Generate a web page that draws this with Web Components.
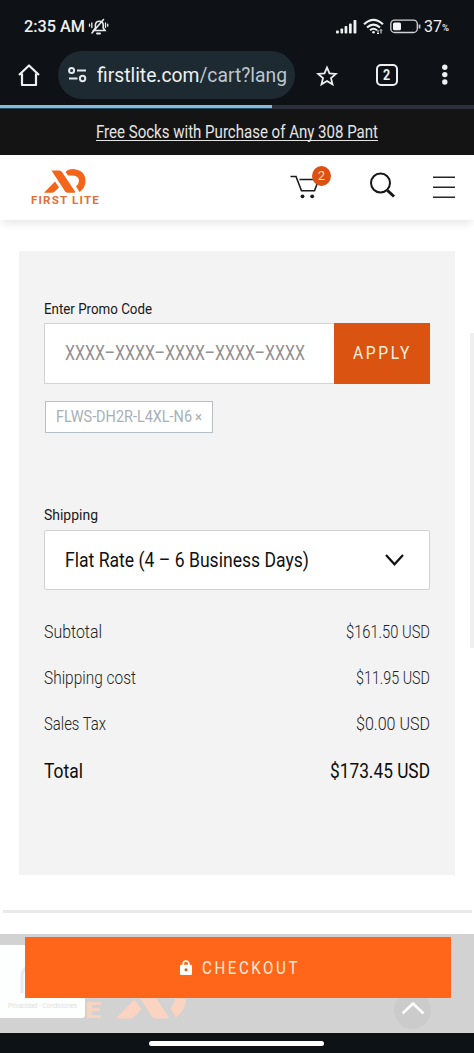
<!DOCTYPE html>
<html lang="en">
<head>
<meta charset="utf-8">
<title>First Lite cart</title>
<style>
html,body{margin:0;padding:0;background:#fff}
body{width:474px;height:1053px;overflow:hidden;font-family:Roboto,"Liberation Sans",sans-serif}
</style>
</head>
<body>
<cart-screen></cart-screen>
<script>
const define = (name, html, ready) => customElements.define(name, class extends HTMLElement {
  connectedCallback() {
    if (this.shadowRoot) return;
    this.attachShadow({mode: 'open'}).innerHTML = html;
    if (ready) ready(this);
  }
});

// Condenses its text horizontally to the width given in "w".
customElements.define('fit-text', class extends HTMLElement {
  constructor() {
    super();
    this.attachShadow({mode: 'open'}).innerHTML =
      '<style>:host{display:block;flex:none;white-space:nowrap}span{display:inline-block;transform-origin:0 50%}</style><span><slot></slot></span>';
  }
  connectedCallback() {
    const w = +this.getAttribute('w'), s = this.shadowRoot.querySelector('span');
    this.style.width = w + 'px';
    const n = s.getBoundingClientRect().width;
    if (n) s.style.transform = `scaleX(${w / n})`;
  }
});

define('status-bar', `<style>
:host{display:flex;height:51px;box-sizing:border-box;padding:17px 25px 0 24px;color:#eef0f2;font-size:16.5px;line-height:20px;font-weight:500;align-items:flex-start}
.r{margin-left:auto;display:flex}
.p{font-weight:400}
svg{display:block;flex:none}
</style>
<fit-text w="61">2:35 AM</fit-text>
<svg width="21" height="20" viewBox="0 0 21 20" style="margin-left:3px" fill="none" stroke="#e6e8ea" stroke-width="1.6" stroke-linecap="round"><path d="M5.500 13.500H17l-1.800-2.500V8c0-5-7.800-5-7.800 0v3zM4 16L15.500 2.500" /><path d="M9 16.500h3" stroke-width="2"/><path d="M3.800 6v4.500M1.500 7.200v2M17.500 6v4.500M19.700 7.200v2" stroke-width="1.300"/></svg>
<div class="r">
<svg width="22" height="20" viewBox="0 0 22 20" fill="#eef0f2" style="margin-right:1px"><rect x="1" y="13.500" width="2.800" height="3" rx=".8"/><rect x="5.500" y="11.500" width="2.600" height="5" rx=".8"/><rect x="9.600" y="9" width="2.700" height="7.500" rx=".8"/><rect x="14" y="6.500" width="2.700" height="10" rx=".8"/><rect x="18.500" y="3" width="2.900" height="13.500" rx=".8"/></svg>
<svg width="21" height="20" viewBox="0 0 21 20" style="margin-left:5px" fill="none" stroke="#eef0f2" stroke-width="2.100"><path d="M1 7.200Q10.500-1.600 20 7.200M4 10.500Q10.500 4.600 17 10.500M7 13.200Q10.500 10.300 14 13.200"/><circle cx="10.500" cy="15.300" r="1.300" fill="#eef0f2" stroke="none"/><path d="M15 13v4M18 12.500v4M14 16l1 1 1-1M17 13.500l1-1 1 1" stroke-width="1"/></svg>
<svg width="31" height="20" viewBox="0 0 31 20" style="margin:0 3px 0 6px"><rect x=".8" y="3.200" width="26.500" height="12.300" rx="3.800" fill="none" stroke="#d0d3d5" stroke-width="1.300"/><rect x="3" y="5.500" width="8" height="7.800" rx="1.500" fill="#f3f4f5"/><path d="M29.500 7.500v4" stroke="#c9cdd0" stroke-width="1.700"/></svg>
<fit-text w="18" class="p">37</fit-text><fit-text w="7" style="font-size:9px;line-height:23px">%</fit-text>
</div>`);

define('browser-bar', `<style>
:host{display:flex;height:54px;box-sizing:border-box;padding-left:17px;align-items:flex-start;color:#edf0f2}
svg{display:block;flex:none}
.pill{margin-left:17px;width:237px;height:48px;border-radius:24px;background:#1d2a32;display:flex;align-items:center;box-sizing:border-box;padding-left:10px;font-size:20px;line-height:48px}
.pill fit-text{margin-left:10px}
i{font-style:normal;color:#bdc6cc}
.tabs{margin:13px 0 0 38px;width:22px;height:22px;box-sizing:border-box;border:2.300px solid #edf0f2;border-radius:5px;display:flex;justify-content:center;font-size:15px;font-weight:700;line-height:18px}
</style>
<svg width="24" height="48" viewBox="0 0 24 48" fill="none" stroke="#eef1f3" stroke-width="2.200" stroke-linejoin="round"><path d="M2 24L12 14.500L22 24M5 22.500V34H19V22.500"/></svg>
<div class="pill"><svg width="19" height="20" viewBox="0 0 19 20" fill="none" stroke="#e2e8eb" stroke-width="2"><circle cx="3.600" cy="5.500" r="2.500"/><path d="M9 5.500h9M1 13.500h8.500"/><circle cx="14.600" cy="13.500" r="2.700"/></svg>
<fit-text w="190">firstlite.com<i style="font-style:normal;color:#bdc6cc">/cart?lang</i></fit-text></div>
<svg width="22" height="48" viewBox="0 0 22 48" style="margin-left:21px" fill="none" stroke="#edf0f2" stroke-width="1.800"><path d="M11 16.500l2.500 5.900 6.400.5-4.900 4.200 1.500 6.200-5.500-3.300-5.500 3.300 1.500-6.200-4.900-4.200 6.400-.5z"/></svg>
<div class="tabs"><fit-text w="7.200">2</fit-text></div>
<svg width="8" height="48" viewBox="0 0 8 48" style="margin-left:42px" fill="#edf0f2"><circle cx="4.800" cy="16.300" r="2.700"/><circle cx="4.800" cy="23.600" r="2.700"/><circle cx="4.800" cy="31" r="2.700"/></svg>`);

define('load-progress', `<style>:host{display:block;height:4px;background:#2c323c}div{width:272px;height:3px;background:#86bcdb;border-bottom:1px solid #26485b}</style><div></div>`);

define('promo-banner', `<style>
:host{display:flex;justify-content:center;height:46px;background:#141414;color:#e4e4e4;font-size:17.500px;line-height:46px}
u{text-underline-offset:2px;text-decoration-thickness:1px;text-decoration-skip-ink:none}
</style><fit-text w="282"><u>Free Socks with Purchase of Any 308 Pant</u></fit-text>`);

define('brand-mark', `<style>:host{display:block}svg{display:block;width:100%;height:100%}</style>
<svg viewBox="0 0 42 24" preserveAspectRatio="none"><g fill="var(--mark,#f2651b)"><path d="M7.500 1.500H15.500Q17 1.500 18 3L31 22.500Q31.500 23.700 30 23.700H23.500Q22 23.700 21 22.300Z"/><path d="M0 23.700L11 12.500L15 18.500L10.500 22.800Q9.500 23.700 8 23.700Z"/><path d="M21.500 3Q24 0 29 0Q41.500 1 41.500 12Q41.500 19 35.500 23L32 17.500Q35 15 35 11.500Q34.500 7 29 6.500H24Z"/></g></svg>`);

define('site-header', `<style>
:host{display:flex;height:65px;background:#fff;padding-left:30px;box-shadow:0 5px 9px -2px #0000001c;position:relative}
.logo{width:70px;padding-top:14px;color:#e0703c;font-size:10px;line-height:12px;font-weight:700;letter-spacing:1px}
brand-mark{width:42px;height:24px;margin:0 0 2px 14px}
.logo fit-text{margin-left:1px}
.cart{position:relative;margin:11px 0 0 189px;width:43px;height:40px}
.n{position:absolute;left:23px;top:0;width:19px;height:20px;border-radius:50%;background:#dc5012;color:#ffd9bd;font-size:13px;line-height:20px;text-align:center}
svg{display:block;flex:none}
</style>
<div class="logo"><brand-mark></brand-mark><fit-text w="69">FIRST LITE</fit-text></div>
<div class="cart"><svg width="36" height="36" viewBox="0 0 36 36" fill="none" stroke="#1b1b1b" stroke-width="1.600"><path d="M1.500 10.500H7L12.500 24.800H25.500L29.500 14M10.500 13.500H25"/><circle cx="13.500" cy="30.300" r="1.900" fill="#1b1b1b" stroke="none"/><circle cx="23.200" cy="30.300" r="1.900" fill="#1b1b1b" stroke="none"/></svg><div class="n">2</div></div>
<svg width="27" height="28" viewBox="0 0 27 28" style="margin:16px 0 0 37px" fill="none" stroke="#151515"><circle cx="11.500" cy="12" r="9.500" stroke-width="2"/><path d="M18.500 19.500L25 25.500" stroke-width="3"/></svg>
<svg width="22" height="24" viewBox="0 0 22 24" style="margin:20px 0 0 37px" stroke="#262626" stroke-width="1.600"><path d="M0 2.200H22M0 12.200H22M0 22.200H22"/></svg>`);

define('promo-form', `<style>
:host{display:block}
.l{font-size:15.500px;line-height:20px;color:#181818}
.row{display:flex;height:61px;margin-top:4px}
.in{flex:1;box-sizing:border-box;border:1px solid #d3d3d3;border-right:0;background:#fff;padding-left:20px;font-size:21px;line-height:59px;color:#919191}
.b{width:96px;background:#da5311;color:#fff0dc;display:flex;justify-content:center;font-size:17.500px;line-height:60px;letter-spacing:3px;box-sizing:border-box}
.tag{display:flex;gap:3px;align-items:center;margin-top:17px;margin-left:1px;width:168px;height:32px;box-sizing:border-box;border:1px solid #b4bfc6;background:#fff;color:#a5b0b8;padding-left:10px;font-size:16px;line-height:30px}
</style>
<div class="l"><fit-text w="108">Enter Promo Code</fit-text></div>
<div class="row"><div class="in"><fit-text w="240">XXXX–XXXX–XXXX–XXXX–XXXX</fit-text></div><div class="b"><fit-text w="59">APPLY</fit-text></div></div>
<div class="tag"><fit-text w="136">FLWS-DH2R-L4XL-N6</fit-text><fit-text w="7" style="font-size:15px">×</fit-text></div>`);

define('shipping-select', `<style>
:host{display:block}
.l{font-size:15.500px;line-height:20px;color:#181818}
.s{margin-top:5px;height:60px;box-sizing:border-box;border:1px solid #d2d2d2;border-radius:2px;background:#fff;display:flex;align-items:center;padding:0 25px 0 20px;font-size:20.500px;line-height:58px;color:#111;justify-content:space-between}
</style>
<div class="l"><fit-text w="54">Shipping</fit-text></div>
<div class="s"><fit-text w="244">Flat Rate (4 – 6 Business Days)</fit-text><svg width="19" height="14" viewBox="0 0 19 14" fill="none" stroke="#111" stroke-width="2.200"><path d="M1 2L9.500 11.300L18 2"/></svg></div>`);

define('cost-row', `<style>
:host{display:flex;justify-content:space-between;height:46px;line-height:46px;font-size:18px;font-weight:300;color:#222}
:host([total]){font-size:20.500px;font-weight:400;color:#0d0d0d;height:48px;line-height:48px}
</style><slot></slot>`);

define('cart-summary', `<style>
:host{display:block;margin:31px 19px 0;width:436px;height:624px;box-sizing:border-box;background:#f3f3f3;padding:48px 25px 0}
shipping-select{margin-top:72px}
.c{margin-top:19px}
</style>
<promo-form></promo-form><shipping-select></shipping-select>
<div class="c">
<cost-row><fit-text w="58">Subtotal</fit-text><fit-text w="84">$161.50 USD</fit-text></cost-row>
<cost-row><fit-text w="92">Shipping cost</fit-text><fit-text w="74">$11.95 USD</fit-text></cost-row>
<cost-row><fit-text w="62">Sales Tax</fit-text><fit-text w="74">$0.00 USD</fit-text></cost-row>
<cost-row total><fit-text w="39">Total</fit-text><fit-text w="100">$173.45 USD</fit-text></cost-row>
</div>`);

define('checkout-footer', `<style>
:host{display:block;position:relative;height:99px;margin-top:21px;background:#d2d2d2;overflow:hidden}
.b{position:absolute;left:25px;top:3px;width:426px;height:61px;box-sizing:border-box;padding-left:4px;background:#ff661a;color:#ffead3;display:flex;justify-content:center;align-items:center;font-size:17.500px;line-height:60px;letter-spacing:3px}
.b svg{margin-right:10px}
.card{position:absolute;left:0;top:11px;width:85px;height:73px;box-sizing:border-box;background:#fdfefe;border-radius:0 0 3px 0;padding:55px 0 0 8px;font-size:7px;line-height:12px;color:#dedede}
.card svg{position:absolute;left:20px;top:18px}
.t{position:absolute;left:85px;top:66px;color:#f7d3c1;font:900 22px/22px Roboto,sans-serif}
brand-mark{position:absolute;left:116px;top:44px;width:71px;height:41px;--mark:#fbd4c1}
.up{position:absolute;left:394px;top:58px;width:37px;height:37px;border-radius:50%;background:#cbcbcb}
.up svg{position:absolute;left:7px;top:9px}
</style>
<div class="t"><fit-text w="16">E</fit-text></div><brand-mark></brand-mark>
<div class="card"><svg width="12" height="34" viewBox="0 0 12 34" fill="none" stroke="#e6e9f6" stroke-width="3"><path d="M10 2Q2 6 2 13V30"/></svg><fit-text w="69">Privacidad - Condiciones</fit-text></div>
<div class="up"><svg width="24" height="16" viewBox="0 0 24 16" fill="none" stroke="#fff" stroke-width="2.500"><path d="M1.500 12.500L12 2.500L22.500 12.500"/></svg></div>
<div class="b"><svg width="12" height="15" viewBox="0 0 12 15"><path d="M3.200 6V3.800Q3.200 1 6 1T8.800 3.800V6" fill="none" stroke="#fff" stroke-width="1.600"/><rect y="4.800" width="12" height="10.200" rx="1.300" fill="#fff"/><circle cx="6" cy="9.800" r="1.500" fill="#d85817"/></svg><fit-text w="98">CHECKOUT</fit-text></div>`);

define('gesture-bar', `<style>:host{display:flex;height:20px;background:#0d1217;justify-content:center}div{width:175px;height:5px;border-radius:3px;background:#fff;margin:8px 1px 0 0}</style><div></div>`);

define('cart-screen', `<style>
:host{display:flex;flex-direction:column;width:474px;height:1053px;position:relative;overflow:hidden}
.chrome{background:#0e1216;flex:none}
hr{margin:35px 0 0 3px;height:3px;border:0;background:#e9e9e9;flex:none;width:469px}
.sb{position:absolute;left:470px;top:333px;width:4px;height:315px;background:#efefef}
site-header,promo-banner,cart-summary,checkout-footer,gesture-bar{flex:none}
</style>
<div class="chrome"><status-bar></status-bar><browser-bar></browser-bar><load-progress></load-progress></div>
<promo-banner></promo-banner>
<site-header></site-header>
<cart-summary></cart-summary>
<hr>
<checkout-footer></checkout-footer>
<gesture-bar></gesture-bar>
<div class="sb"></div>`);
</script>
</body>
</html>
